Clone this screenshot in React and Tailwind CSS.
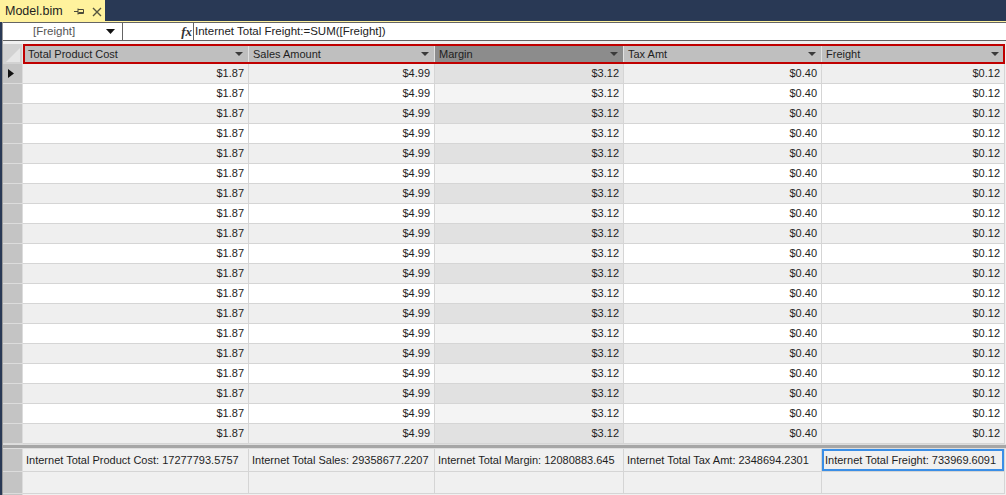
import React from "react";

const columns = [
  { name: "Total Product Cost", width: 226, value: "$1.87", total: "Internet Total Product Cost: 17277793.5757" },
  { name: "Sales Amount", width: 186, value: "$4.99", total: "Internet Total Sales: 29358677.2207" },
  { name: "Margin", width: 189, value: "$3.12", total: "Internet Total Margin: 12080883.645", selected: true },
  { name: "Tax Amt", width: 198, value: "$0.40", total: "Internet Total Tax Amt: 2348694.2301" },
  { name: "Freight", width: 183, value: "$0.12", total: "Internet Total Freight: 733969.6091", active: true },
];

const rows = Array.from({ length: 19 }, (_, i) => i);

function SortArrow() {
  return (
    <svg width="8" height="5" viewBox="0 0 8 5" className="shrink-0">
      <polygon points="0,0 8,0 4,4" fill="#3a3a3a" />
    </svg>
  );
}

function PinIcon() {
  return (
    <svg width="11" height="9" viewBox="0 0 11 9">
      <path d="M0 4.5H4M4 1.5V7.5M4 2.5H9.5V6.5H4M4.5 5.5H9.5" stroke="#4a4a3a" strokeWidth="1" fill="none" />
    </svg>
  );
}

function CloseIcon() {
  return (
    <svg width="10" height="10" viewBox="0 0 10 10">
      <path d="M1 1L9 9M9 1L1 9" stroke="#55553f" strokeWidth="1.4" />
    </svg>
  );
}

export default function App() {
  return (
    <div
      className="w-[1006px] h-[495px] overflow-hidden bg-[#293955] flex flex-col text-[11px] text-[#1e1e1e]"
      style={{ fontFamily: '"Liberation Sans", Arial, sans-serif' }}
    >
      {/* tab strip */}
      <div className="h-[21px] flex shrink-0">
        <div className="w-[105px] bg-[#fff29d] flex items-center pl-[5px] pt-[1px]">
          <span className="text-[12.5px] text-[#1e1e1e]">Model.bim</span>
          <span className="ml-[11px] mt-[1px]"><PinIcon /></span>
          <span className="ml-[7px] mt-[1px]"><CloseIcon /></span>
        </div>
      </div>
      <div className="h-[1px] bg-[#fff29d] shrink-0" />

      {/* content */}
      <div className="flex-1 ml-[2px] border-l border-[#9a9a9a] bg-[#f0f0f0] flex flex-col">
        {/* formula bar */}
        <div className="h-[19px] bg-white border-y border-[#646464] flex items-stretch shrink-0">
          <div className="w-[120px] border-r border-[#646464] flex items-center relative">
            <span className="ml-[30px] text-[#555] text-[11.5px]">[Freight]</span>
            <span className="absolute right-[7px] top-[6px]">
              <svg width="9" height="5" viewBox="0 0 9 5">
                <polygon points="0,0 9,0 4.5,5" fill="#111" />
              </svg>
            </span>
          </div>
          <div className="w-[71px] border-r border-[#646464] flex items-center justify-end pr-[1px]">
            <span
              className="italic font-bold text-[13px] text-[#333] leading-none"
              style={{ fontFamily: '"Liberation Serif", serif' }}
            >
              fx
            </span>
          </div>
          <div className="flex items-center pl-[1px] text-[11.5px] text-[#222]">
            Internet Total Freight:=SUM([Freight])
          </div>
        </div>
        <div className="h-[3px] shrink-0" />

        {/* header */}
        <div className="flex h-[20px] shrink-0">
          <div className="w-[20px] bg-[#d2d2d2] border-r border-[#e4e4e4] relative">
            <svg width="14" height="14" viewBox="0 0 14 14" className="absolute right-[2px] bottom-[2px]">
              <polygon points="14,0 14,14 0,14" fill="#e6e6e6" />
            </svg>
          </div>
          <div className="flex outline-2 outline-[#c00000] -outline-offset-2">
            {columns.map((c, i) => (
              <div
                key={c.name}
                style={{ width: c.width }}
                className={
                  "flex items-center justify-between border-r border-[#e2e2e2] pr-[5px] " +
                  (i === 0 ? "pl-[5px] " : "pl-[4px] ") +
                  (c.selected ? "bg-[#8c8c8c]" : "bg-[#bfbfbf]")
                }
              >
                <span>{c.name}</span>
                <SortArrow />
              </div>
            ))}
          </div>
        </div>

        {/* data rows */}
        {rows.map((r) => {
          const gray = r % 2 === 0;
          return (
            <div key={r} className="flex h-[20px] shrink-0">
              <div className="w-[20px] bg-[#c4c4c4] border-b border-r border-[#dcdcdc] flex items-center pl-[5px]">
                {r === 0 && (
                  <svg width="6" height="9" viewBox="0 0 6 9">
                    <polygon points="0,0 6,4.5 0,9" fill="#111" />
                  </svg>
                )}
              </div>
              {columns.map((c) => (
                <div
                  key={c.name}
                  style={{ width: c.width }}
                  className={
                    "flex items-center justify-end pr-[4px] border-b border-r border-[#d5d5d5] " +
                    (c.selected
                      ? gray
                        ? "bg-[#e1e1e1]"
                        : "bg-[#f4f4f4]"
                      : gray
                      ? "bg-[#efefef]"
                      : "bg-white")
                  }
                >
                  {c.value}
                </div>
              ))}
            </div>
          );
        })}

        {/* splitter */}
        <div className="h-[5px] shrink-0 border-y border-[#dedede] bg-[#a6a6a6]" />

        {/* totals */}
        <div className="flex h-[23px] shrink-0">
          <div className="w-[20px] bg-[#c4c4c4] border-b border-r border-[#dcdcdc]" />
          {columns.map((c) => (
            <div
              key={c.name}
              style={{ width: c.width }}
              className={
                "flex items-center pl-[3px] border-b border-r border-[#d5d5d5] bg-[#f0f0f0] whitespace-nowrap " +
                (c.active ? "shadow-[inset_0_0_0_2px_#3a8ee6]" : "")
              }
            >
              {c.total}
            </div>
          ))}
        </div>
        <div className="flex h-[22px] shrink-0">
          <div className="w-[20px] bg-[#c4c4c4] border-b border-r border-[#dcdcdc]" />
          {columns.map((c) => (
            <div
              key={c.name}
              style={{ width: c.width }}
              className="border-b border-r border-[#d5d5d5] bg-[#f0f0f0]"
            />
          ))}
        </div>
        <div className="flex flex-1">
          <div className="w-[20px] bg-[#c4c4c4] border-r border-[#dcdcdc]" />
          <div className="flex-1" />
        </div>
      </div>
    </div>
  );
}
